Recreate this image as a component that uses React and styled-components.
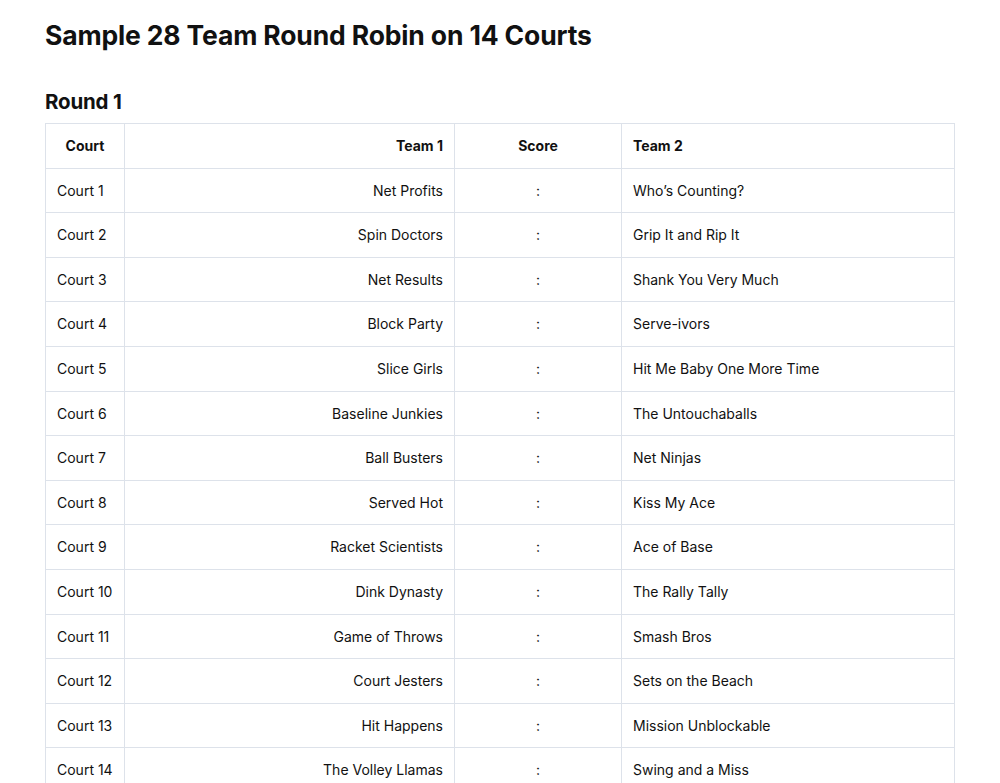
import React from "react";
import styled, { createGlobalStyle } from "styled-components";

const GlobalStyle = createGlobalStyle`
  html, body {
    margin: 0;
    padding: 0;
    background: #ffffff;
  }
  body {
    font-family: Inter, "Liberation Sans", Arial, sans-serif;
    color: #111111;
  }
`;

const matches = [
  ["Net Profits", "Who’s Counting?"],
  ["Spin Doctors", "Grip It and Rip It"],
  ["Net Results", "Shank You Very Much"],
  ["Block Party", "Serve-ivors"],
  ["Slice Girls", "Hit Me Baby One More Time"],
  ["Baseline Junkies", "The Untouchaballs"],
  ["Ball Busters", "Net Ninjas"],
  ["Served Hot", "Kiss My Ace"],
  ["Racket Scientists", "Ace of Base"],
  ["Dink Dynasty", "The Rally Tally"],
  ["Game of Throws", "Smash Bros"],
  ["Court Jesters", "Sets on the Beach"],
  ["Hit Happens", "Mission Unblockable"],
  ["The Volley Llamas", "Swing and a Miss"],
];

const Page = styled.div`
  padding: 15px 45px 40px;
`;

const Title = styled.h1`
  margin: 0;
  font-size: 26.5px;
  line-height: 40px;
  font-weight: 700;
  letter-spacing: -0.15px;
`;

const RoundTitle = styled.h2`
  margin: 32px 0 6px;
  font-size: 20.5px;
  line-height: 30px;
  font-weight: 700;
  letter-spacing: -0.2px;
`;

const Table = styled.table`
  width: 909px;
  border-collapse: collapse;
  table-layout: fixed;
  font-size: 14px;
  line-height: 21.6px;
`;

const Cell = styled.td`
  border: 1px solid #dde2ea;
  padding: 11px;
  text-align: ${(p) => p.$align || "left"};
  font-weight: ${(p) => (p.$head ? 700 : 400)};
  white-space: nowrap;
`;

export default function App() {
  return (
    <>
      <GlobalStyle />
      <Page>
        <Title>Sample 28 Team Round Robin on 14 Courts</Title>
        <RoundTitle>Round 1</RoundTitle>
        <Table>
          <colgroup>
            <col style={{ width: 79 }} />
            <col style={{ width: 330 }} />
            <col style={{ width: 167 }} />
            <col style={{ width: 333 }} />
          </colgroup>
          <thead>
            <tr>
              <Cell as="th" $head $align="center">Court</Cell>
              <Cell as="th" $head $align="right">Team 1</Cell>
              <Cell as="th" $head $align="center">Score</Cell>
              <Cell as="th" $head>Team 2</Cell>
            </tr>
          </thead>
          <tbody>
            {matches.map(([a, b], i) => (
              <tr key={i}>
                <Cell>Court {i + 1}</Cell>
                <Cell $align="right">{a}</Cell>
                <Cell $align="center">:</Cell>
                <Cell>{b}</Cell>
              </tr>
            ))}
          </tbody>
        </Table>
      </Page>
    </>
  );
}
